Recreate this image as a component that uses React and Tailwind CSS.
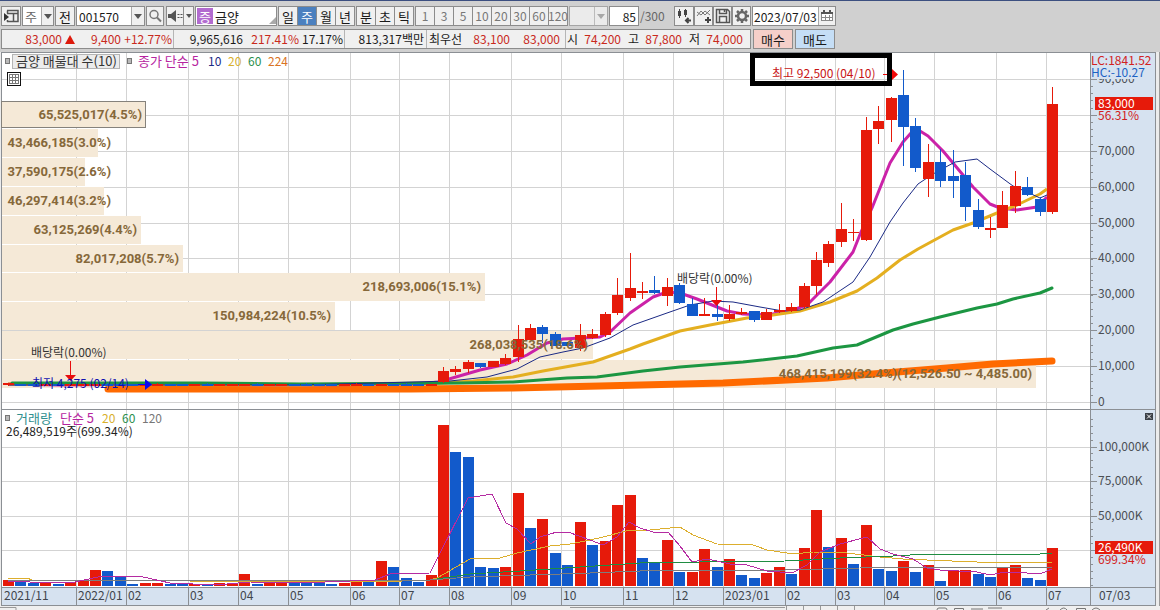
import React from "react";

const RED = "#e61a0a";
const BLUE = "#125acb";

// kind, high, open/close top, open/close bottom, low, volume top
const EARLY = [
  ["r", 580], ["b", 582], ["b", 583], ["r", 583], ["b", 584], ["r", 582], ["r", 581], ["r", 570], ["b", 571],
  ["b", 576], ["b", 584], ["r", 583], ["r", 583], ["b", 584], ["b", 583], ["r", 584], ["b", 584], ["r", 583],
  ["r", 583], ["r", 574], ["b", 584], ["r", 583], ["r", 582], ["b", 583], ["b", 583], ["b", 583], ["b", 584],
  ["r", 583], ["r", 582], ["b", 582], ["r", 561], ["b", 567], ["b", 578], ["b", 582], ["r", 575],
].map(([k, v], i) => [k, 384 - (i % 4 === 0 ? 1 : 0), i < 1 ? 383 : 384, i < 1 ? 385 : 386, 386, v]);

const LATER = [
  ["r", 367, 371, 382, 383, 425], ["r", 366, 369, 372, 375, 452, "b"], ["r", 360, 362, 369, 373, 457, "b"],
  ["b", 363, 363, 367, 368, 567], ["r", 361, 361, 367, 367, 568, "b"], ["r", 354, 358, 364, 365, 567],
  ["r", 325, 339, 357, 362, 493], ["r", 324, 328, 340, 340, 528, "b"], ["b", 325, 327, 334, 343, 519, "r"],
  ["b", 332, 334, 346, 346, 553], ["b", 342, 342, 346, 346, 565], ["r", 324, 335, 348, 351, 522],
  ["r", 329, 334, 338, 339, 545, "b"], ["r", 312, 314, 335, 337, 541], ["r", 278, 295, 313, 315, 505],
  ["r", 253, 288, 298, 301, 495], ["r", 282, 291, 293, 299, 558, "b"], ["b", 276, 290, 293, 294, 562],
  ["r", 278, 287, 296, 306, 540], ["b", 283, 285, 303, 304, 572], ["b", 298, 304, 316, 316, 572, "r"],
  ["r", 298, 314, 316, 316, 549], ["b", 304, 314, 317, 321, 567], ["r", 305, 314, 319, 321, 559],
  ["r", 308, 312, 314, 315, 575, "b"], ["b", 311, 311, 320, 322, 578], ["r", 309, 312, 320, 320, 573],
  ["r", 304, 310, 312, 313, 567], ["r", 303, 307, 311, 312, 574, "b"], ["r", 283, 286, 307, 309, 548],
  ["r", 252, 260, 286, 295, 510], ["r", 241, 244, 263, 267, 547, "b"], ["r", 203, 229, 242, 247, 538],
  ["r", 219, 232, 233, 241, 564, "b"], ["r", 117, 130, 240, 241, 525], ["r", 106, 121, 129, 144, 569, "b"],
  ["r", 97, 98, 120, 142, 571, "b"], ["b", 70, 95, 127, 166, 561, "r"], ["b", 118, 126, 168, 172, 572],
  ["r", 144, 162, 179, 197, 565], ["b", 149, 162, 181, 187, 581], ["b", 150, 176, 181, 198, 571, "r"],
  ["b", 162, 175, 207, 221, 570, "r"], ["b", 199, 210, 227, 229, 574], ["r", 217, 228, 230, 238, 577, "b"],
  ["r", 191, 205, 228, 228, 568], ["r", 171, 186, 206, 213, 565], ["b", 177, 187, 195, 196, 578],
  ["b", 197, 199, 212, 216, 580], ["r", 87, 104, 212, 214, 548],
];
const BARS = [...EARLY, ...LATER];
const left = (i) => 3 + Math.round(i * 12.43);
const tone = (k) => (k === "r" ? RED : BLUE);

const MONTHS = [
  [76, "2022/01"], [126, "02"], [188, "03"], [238, "04"], [288, "05"], [350, "06"], [399, "07"], [449, "08"],
  [511, "09"], [561, "10"], [623, "11"], [673, "12"], [723, "2023/01"], [785, "02"], [835, "03"], [884, "04"],
  [934, "05"], [996, "06"], [1046, "07"],
];
const PRICE_ROWS = [
  [79, "90,000"], [115, ""], [151, "70,000"], [187, "60,000"], [223, "50,000"], [258, "40,000"],
  [294, "30,000"], [330, "20,000"], [366, "10,000"], [402, "0"],
];
const VOLUME_ROWS = [[447, "100,000K"], [481, "75,000K"], [516, "50,000K"], [550, ""]];

const PROFILE = [
  [129, 28, 98, 111, "43,466,185(3.0%)"], [158, 28, 85, 111, "37,590,175(2.6%)"],
  [187, 28, 104, 111, "46,297,414(3.2%)"], [216, 28, 141, 137, "63,125,269(4.4%)"],
  [245, 27, 183, 179, "82,017,208(5.7%)"], [273, 28, 485, 481, "218,693,006(15.1%)"],
  [302, 28, 335, 331, "150,984,224(10.5%)"], [331, 28, 593, 588, "268,038,535(18.6%)"],
  [360, 28, 1036, 1032, "468,415,199(32.4%)(12,526.50 ~ 4,485.00)"],
];

const MA5 = "8,384 60,385 150,384 300,385 420,384 438,382 449,379 480,370 507,364 527,355 547,343 563,339 600,337 610,332 630,313 653,297 667,292 680,293 697,299 727,311 743,314 767,315 790,311 807,305 830,282 853,252 861,232 872,208 890,163 903,142 911,133 920,131 928,136 943,151 963,175 973,187 990,204 1000,208 1017,210 1037,207 1047,197";
const MA10 = "8,385 300,385 450,381 487,377 517,369 540,357 563,352 583,348 610,338 633,325 667,313 690,305 713,301 733,302 760,307 783,311 800,310 823,302 853,282 870,257 890,222 903,203 918,184 933,174 955,162 977,159 990,169 1013,186 1027,192 1040,198 1047,195";
const MA20 = "8,384 300,385 440,383 473,381 513,377 543,371 593,362 630,349 643,344 680,331 710,325 747,318 773,315 800,311 830,302 857,291 877,278 900,260 918,249 953,230 973,223 997,213 1017,205 1040,194 1047,189";
const MA60 = "12,383 200,383 300,384 460,383 513,382 567,378 597,377 643,371 680,367 743,362 797,356 833,348 857,345 893,330 913,324 940,317 977,308 997,304 1013,299 1040,293 1052,288";
const MA224 = "108,389 410,389 513,388 600,386 723,383 827,378 860,375 947,368 993,364 1052,361";
const V5 = "8,581 30,582 75,582 98,577 115,576 139,576 152,579 170,583 215,585 250,582 300,583 375,580 390,574 430,573 468,498 480,496 492,494 506,523 517,529 531,544 540,537 557,532 568,532 590,540 603,545 617,537 629,522 640,528 653,532 668,532 680,546 692,562 707,559 717,561 730,564 747,565 767,571 792,573 807,565 820,552 840,544 867,537 880,549 893,554 913,559 927,568 940,570 977,572 990,575 1000,573 1013,572 1040,574 1052,569";
const V20 = "8,578 27,578 32,580 190,581 375,582 430,580 437,578 470,559 500,558 517,553 550,546 570,544 590,540 603,537 630,530 650,530 680,527 693,535 717,544 753,545 767,550 793,554 813,552 847,553 880,557 903,559 927,560 977,562 1033,562 1052,562";
const V60 = "8,580 375,581 430,580 470,574 520,571 580,567 640,563 700,562 785,561 840,558 893,556 910,555 1040,554 1052,553";
const V120 = "8,581 430,580 470,577 530,575 590,573 640,571 785,570 860,568 1052,567";

const CHART_TEXT = "block h-auto w-full overflow-visible text-[12px]";

function Line({ points, color, width = 1, cap = "butt" }) {
  return <polyline points={points} fill="none" stroke={color} strokeWidth={width} strokeLinejoin="round" strokeLinecap={cap} />;
}

function Grid({ top, bottom, rows }) {
  return (
    <g fill="#d3d3d3" shapeRendering="crispEdges">
      {MONTHS.map(([x]) => <rect key={x} x={x} y={top} width="1" height={bottom - top} />)}
      {rows.map(([y]) => <rect key={y} x="2" y={y} width="1088" height="1" />)}
    </g>
  );
}

function Axis({ top, bottom, rows, first, step }) {
  const minor = [];
  for (let y = first; y < bottom; y += step) minor.push(Math.round(y));
  return (
    <g>
      <g shapeRendering="crispEdges">
        <rect x="1090" y={top} width="65" height={bottom - top} fill="#d6e2f0" />
        <rect x="1090" y={top} width="1" height={bottom - top} fill="#8b8f94" />
        {minor.map((y) => <rect key={y} x="1091" y={y} width="2" height="1" fill="#8b8f94" />)}
        {rows.map(([y]) => <rect key={y} x="1091" y={y} width="6" height="1" fill="#8b8f94" />)}
      </g>
      {rows.map(([y, label]) => label && <text key={y} x="1098" y={y + 4} fill="#4b4f54">{label}</text>)}
    </g>
  );
}

function Marker({ x, y }) {
  return <rect x={x + 0.5} y={y + 0.5} width="4" height="5" fill="#b9b9b9" stroke="#777" />;
}

function PriceChart() {
  return (
    <svg viewBox="2 53 1153 356" className={CHART_TEXT} role="img" aria-label="금양 주봉 차트">
      <rect x="2" y="53" width="1153" height="356" fill="#fff" />
      <Grid top={53} bottom={409} rows={PRICE_ROWS} />
      <g shapeRendering="crispEdges" fill="#f5e9d7">
        <rect x="1.5" y="101.5" width="144" height="26" stroke="#85827c" />
        {PROFILE.map(([y, h, r]) => <rect key={y} x="2" y={y} width={r - 2} height={h} />)}
      </g>
      <Line points={MA224} color="#ff6a00" width={7} cap="round" />
      <Line points={MA5} color="#cb22a8" width={3} />
      <Line points={MA20} color="#e4af20" width={3} />
      <Line points={MA60} color="#1c9642" width={3} cap="round" />
      <Line points={MA10} color="#1b2a85" />
      <g shapeRendering="crispEdges">
        {BARS.map(([k, hi, top, bottom, lo], i) => (
          <g key={i} fill={tone(k)}>
            <rect x={left(i) + 5} y={hi} width="1" height={lo - hi} />
            <rect x={left(i)} y={top} width="11" height={bottom - top} />
          </g>
        ))}
      </g>
      <g className="text-[13px] font-bold font-['Roboto',sans-serif]" fill="#86683a" textAnchor="end">
        <text x="142" y="119">65,525,017(4.5%)</text>
        {PROFILE.map(([y, , , r, label]) => <text key={y} x={r} y={y + 18}>{label}</text>)}
      </g>
      <g fill="#333">
        <text x="31" y="357">배당락(0.00%)</text>
        <text x="677" y="283">배당락(0.00%)</text>
      </g>
      <path d="M70 361h1v14h5l-5.500 6l-5.500-6h5z" fill="#e80c0c" />
      <path d="M716 287h1v13h5l-5.500 6l-5.500-6h5z" fill="#e80c0c" />
      <text x="32" y="388" fill="#1010b0">최저 4,275 (02/14)</text>
      <path d="M138 384h7v-5l7 5.500l-7 5.500v-5h-7z" fill="#0808f0" />

      <rect x="752.500" y="55.500" width="137" height="28" fill="none" stroke="#000" strokeWidth="5" />
      <text x="772" y="78" fill="#c81414">최고 92,500 (04/10)</text>
      <path d="M883 74h4v1h-4zM892 69l6 5.500l-6 5.500z" fill="#f00808" />

      <Marker x={5} y={58} />
      <rect x="12.500" y="54.500" width="107" height="14" fill="#ececec" stroke="#b5b5b5" />
      <g className="text-[13px]">
        <text x="16" y="66" fill="#333">금양 매물대 수(10)</text>
        <text x="138" y="66" fill="#b624a0">종가 단순 5</text>
      </g>
      <Marker x={127} y={58} />
      <text x="208" y="66" fill="#1b2a85">10</text>
      <text x="228" y="66" fill="#d8b02c">20</text>
      <text x="248" y="66" fill="#2b8f4c">60</text>
      <text x="268" y="66" fill="#d97424">224</text>
      <g fill="none" shapeRendering="crispEdges">
        <rect x="7.500" y="72.500" width="13" height="13" fill="#fff" stroke="#111" />
        <path d="M9.500 74.500h9v9h-9zM9.500 77.500h9M9.500 80.500h9M12.500 74.500v9M15.500 74.500v9" stroke="#777" />
      </g>

      <Axis top={53} bottom={409} rows={PRICE_ROWS} first={86} step={7.19} />
      <rect x="1091" y="54" width="64" height="25" fill="#d6e2f0" />
      <text x="1091" y="65" fill="#d22121">LC:1841.52</text>
      <text x="1091" y="77" fill="#1d62c4">HC:-10.27</text>
      <rect x="1095" y="97" width="58" height="13" fill={RED} />
      <text x="1098" y="108" fill="#fff">83,000</text>
      <text x="1098" y="120" fill="#d22121">56.31%</text>
    </svg>
  );
}

function VolumeChart() {
  return (
    <svg viewBox="2 410 1153 177" className={CHART_TEXT} role="img" aria-label="거래량 차트">
      <rect x="2" y="410" width="1153" height="177" fill="#fff" />
      <Grid top={410} bottom={587} rows={VOLUME_ROWS} />
      <g shapeRendering="crispEdges">
        {BARS.map((b, i) => (
          <rect key={i} x={left(i)} y={b[5]} width="11" height={586 - b[5]} fill={tone(b[6] || b[0])} />
        ))}
      </g>
      <g shapeRendering="crispEdges">
        <Line points={V20} color="#dcae2d" />
        <Line points={V60} color="#1f8d42" />
        <Line points={V120} color="#7d7d7d" />
        <Line points={V5} color="#b52ba2" />
      </g>
      <Marker x={5} y={415} />
      <g className="text-[13px]">
        <text x="16" y="423" fill="#2f8f8f">거래량</text>
        <text x="60" y="423" fill="#b624a0">단순 5</text>
      </g>
      <text x="102" y="423" fill="#d8b02c">20</text>
      <text x="122" y="423" fill="#2b8f4c">60</text>
      <text x="142" y="423" fill="#777">120</text>
      <text x="6" y="436" fill="#222">26,489,519주(699.34%)</text>
      <Axis top={410} bottom={587} rows={VOLUME_ROWS} first={419} step={6.9} />
      <rect x="1145" y="413" width="8" height="7" fill="#3c4148" />
      <path d="M1147 414.500l4 4M1151 414.500l-4 4" stroke="#fff" />
      <rect x="1095" y="541" width="58" height="13" fill={RED} />
      <text x="1098" y="552" fill="#fff">26,490K</text>
      <text x="1098" y="564" fill="#d22121">699.34%</text>
    </svg>
  );
}

function TimeAxis() {
  return (
    <svg viewBox="2 588 1153 17" className={CHART_TEXT} role="img" aria-label="기간">
      <rect x="2" y="588" width="1153" height="17" fill="#d6e2f0" />
      <g fill="#8b8f94" shapeRendering="crispEdges">
        {MONTHS.map(([x]) => <rect key={x} x={x} y="588" width="1" height="17" />)}
        <rect x="1090" y="588" width="1" height="17" />
      </g>
      <g fill="#41464d">
        <text x="4" y="600">2021/11</text>
        {MONTHS.map(([x, label]) => <text key={x} x={x + 2} y="600">{label}</text>)}
        <text x="1099" y="600">07/03</text>
      </g>
    </svg>
  );
}

const BTN = "flex h-5 items-center justify-center border border-[#8c8c8c] bg-[#f0f0f0]";

function Caret({ muted }) {
  return (
    <svg viewBox="0 0 8 5" className="h-[5px] w-2">
      <path d="M0 0h8L4 5z" fill={muted ? "#a8a8a8" : "#555"} />
    </svg>
  );
}

function IconButton({ label, className, children }) {
  return (
    <button aria-label={label} className={`${BTN} ${className}`}>
      <svg viewBox="0 0 16 16" className="size-4 shrink-0" fill="none" stroke="#555">{children}</svg>
    </button>
  );
}

function ButtonGroup({ items, active, className, cell }) {
  return (
    <div className={`flex h-5 divide-x divide-[#8c8c8c] border border-[#8c8c8c] bg-[#f0f0f0] ${className}`}>
      {items.map((t) => (
        <button key={t} className={`flex flex-1 items-center justify-center ${cell} ${t === active ? "bg-[#4b80bf] text-white" : ""}`}>{t}</button>
      ))}
    </div>
  );
}

function Toolbar() {
  return (
    <div className="flex items-center gap-px pl-px text-[12px]">
      <IconButton label="화면 목록" className="w-5">
        <path d="M4 2.500h11v11H4M4 5.500h11M10.500 5.500v8M4.500 2.500v3M4.500 12v2" strokeWidth="1.500" />
        <path d="M1 5l5 4l-5 4z" fill="#333" stroke="none" />
      </IconButton>
      <div className="flex h-5 w-8 border border-[#8c8c8c] bg-white">
        <select aria-label="종류" className="h-full w-[18px] appearance-none bg-white pl-0.5 text-[13px] text-[#666]"><option>주</option></select>
        <span className="flex flex-1 items-center justify-center border-l border-[#aaa] bg-[#f0f0f0]"><Caret /></span>
      </div>
      <button className={`${BTN} w-5 text-[13px]`}>전</button>
      <div className="flex h-5 w-[69px] border border-[#8c8c8c] bg-white">
        <input aria-label="종목코드" defaultValue="001570" className="h-full w-[54px] bg-white pl-0.5" />
        <span className="flex flex-1 items-center justify-center border-l border-[#aaa] bg-[#f0f0f0]"><Caret /></span>
      </div>
      <IconButton label="검색" className="w-[18px]">
        <circle cx="7" cy="6.500" r="4" strokeWidth="1.500" stroke="#777" />
        <path d="M10 9.500l4 4" strokeWidth="2" stroke="#777" />
      </IconButton>
      <div className="ml-px flex">
        <IconButton label="소리" className="w-[18px]">
          <path d="M1 6h3l5-4v12l-5-4H1z" fill="#555" stroke="none" />
          <path d="M11.500 6v1M11.500 9v1M14.500 6v1M14.500 9v1" strokeWidth="2" />
        </IconButton>
        <button aria-label="소리 설정" className={`${BTN} w-[10px] border-l-0`}>
          <svg viewBox="0 0 6 4" className="h-1 w-1.5 shrink-0"><path d="M0 0h6L3 4z" fill="#555" /></svg>
        </button>
      </div>
      <div className="flex h-5 w-[82px] items-center border border-[#8c8c8c] bg-white pl-px text-[13px]">
        <span className="flex size-4 items-center justify-center bg-[#b26bcf] text-white">증</span>
        <span className="flex-1 pl-0.5">금양</span>
        <svg viewBox="0 0 7 7" className="mb-px size-[7px] self-end"><path d="M7 0v7H0z" fill="#aaa" /></svg>
      </div>
      <ButtonGroup items={["일", "주", "월", "년"]} active="주" className="w-[77px]" cell="text-[13px]" />
      <ButtonGroup items={["분", "초", "틱"]} className="w-[58px]" cell="text-[13px]" />
      <ButtonGroup items={["1", "3", "5", "10", "20", "30", "60", "120"]} className="w-[153px]" cell="w-0 text-[#777]" />
      <div className="flex h-5 w-[39px] border border-[#a5a5a5] bg-[#ebebeb]">
        <select aria-label="사용자 주기" disabled className="h-full w-6 appearance-none"><option /></select>
        <span className="flex flex-1 items-center justify-center border-l border-[#bbb]"><Caret muted /></span>
      </div>
      <div className="flex items-center">
        <input aria-label="봉 개수" defaultValue="85" className="h-5 w-[30px] border border-[#8c8c8c] bg-white pr-0.5 text-right" />
        <span className="w-[34px] pl-px text-[#666]">/300</span>
      </div>
      <div className="flex">
        <IconButton label="차트 유형" className="w-5">
          <path d="M3.500 1v9M9.500 1v8" stroke="#444" />
          <path d="M2 3h3v5H2zM8 2h3v5H8z" fill="#444" stroke="none" />
          <path d="M10 12.500h5M12.500 10l-2.500 2.500l2.500 2.500" strokeWidth="2" stroke="#444" />
        </IconButton>
        <IconButton label="지표 추가" className="w-[19px]">
          <path d="M1 8l4-5l4 4l5-5M1 4l4 3l4-4l5 4" stroke="#777" />
          <path d="M9 12h6M12 9v6" strokeWidth="2" stroke="#444" />
        </IconButton>
        <IconButton label="저장" className="w-[19px]">
          <path d="M1.500 1.500h11l2 2v11h-13zM4.500 1.500v4h7v-4M4.500 14.500v-6h7v6M9.500 2v2" stroke="#555" strokeWidth="1.500" />
        </IconButton>
        <IconButton label="설정" className="w-[19px]">
          <circle cx="8" cy="8" r="4" strokeWidth="2.500" stroke="#666" />
          <path d="M8 1v2M8 13v2M1 8h2M13 8h2M3 3l1.500 1.500M11.500 11.500L13 13M3 13l1.500-1.500M11.500 4.500L13 3" strokeWidth="2.500" stroke="#666" />
        </IconButton>
      </div>
      <div className="flex h-5 w-[84px] border border-[#8c8c8c] bg-white">
        <input aria-label="날짜" defaultValue="2023/07/03" className="h-full w-[65px] bg-white pl-px" />
        <button aria-label="달력" className="flex flex-1 items-center justify-center border-l border-[#aaa] bg-[#f0f0f0]">
          <svg viewBox="0 0 12 12" className="size-3" fill="none" stroke="#888" shapeRendering="crispEdges">
            <path d="M.5 2.500h11v8H.5zM1 7.500h10M4.500 5v5M8.500 5v5" fill="#fff" />
            <path d="M0 2h12v2H0zM2 0h2v2H2zM8 0h2v2H8z" fill="#555" stroke="none" />
          </svg>
        </button>
      </div>
    </div>
  );
}

function QuoteBar() {
  const cell = "flex h-full items-center";
  const red = "text-right text-[#c92a1c]";
  return (
    <div className="mt-[3px] flex gap-0.5 pl-px text-[12px] whitespace-nowrap text-[#1a1a1a]">
      <div className="flex h-5 w-[750px] items-center divide-x divide-[#b5b5b5] border border-[#8c8c8c] bg-[#f0f0f0]">
        <div className={`${cell} w-[172px]`}>
          <span className={`w-[60px] ${red}`}>83,000</span>
          <svg viewBox="0 0 10 9" className="ml-[3px] h-[9px] w-2.5"><path d="M5 0l5 9H0z" fill="#dd1a0c" /></svg>
          <span className={`w-[46px] ${red}`}>9,400</span>
          <span className={`w-[51px] ${red}`}>+12.77%</span>
        </div>
        <div className={`${cell} w-[171px]`}>
          <span className="w-[69px] text-right">9,965,616</span>
          <span className={`w-[56px] ${red}`}>217.41%</span>
          <span className="w-11 text-right">17.17%</span>
        </div>
        <div className={`${cell} w-[82px] justify-end pr-0.5`}>813,317백만</div>
        <div className={`${cell} w-[139px] pl-0.5`}>
          <span className="w-[35px]">최우선</span>
          <span className={`w-[46px] ${red}`}>83,100</span>
          <span className={`w-[50px] ${red}`}>83,000</span>
        </div>
        <div className={`${cell} flex-1 pl-px`}>
          {[["시", "74,200"], ["고", "87,800"], ["저", "74,000"]].map(([k, v]) => (
            <React.Fragment key={k}>
              <span className="w-3">{k}</span>
              <span className={`mr-[7px] w-[42px] ${red}`}>{v}</span>
            </React.Fragment>
          ))}
        </div>
      </div>
      <button className="flex h-5 w-10 items-center justify-center border border-[#8c8c8c] bg-[#f5cfc9] text-[13px]">매수</button>
      <button className="flex h-5 w-10 items-center justify-center border border-[#8c8c8c] bg-[#c5def6] text-[13px]">매도</button>
    </div>
  );
}

export default function App() {
  return (
    <div className="w-full overflow-hidden border-t border-[#3c4f80] bg-[#d0d0d0] font-['Noto_Sans_CJK_KR',sans-serif] leading-none text-[#1a1a1a]">
      <header className="pt-[5px] pb-[3px]">
        <Toolbar />
        <QuoteBar />
      </header>
      <main className="border-r border-[#9a9a9a] bg-[#ececec] pr-[3px] pl-px">
        <div className="divide-y divide-[#8b8f94] border border-[#8b8f94]">
          <PriceChart />
          <VolumeChart />
          <TimeAxis />
        </div>
      </main>
      <footer className="bg-[#efefef]">
        <svg viewBox="0 0 1160 4" className="block h-auto w-full" fill="none" stroke="#777" aria-hidden="true">
          <path d="M0 1.500h16v2.500M570 1.500h215M786.500 0v4M803.500 0v4M820.500 0v4M837.500 0v4M854.500 0v4" stroke="#999" />
          <path d="M937 4q0-2 2-2h6q2 0 2 2M954.500 4v-1.500h9v1.500M971 3h12M988 2h14M1046 4l3-2M1060 4q4-4 7 0M1076.500 4v-1.500h9v1.500M1092 4q4-4 8 0" />
        </svg>
      </footer>
    </div>
  );
}
